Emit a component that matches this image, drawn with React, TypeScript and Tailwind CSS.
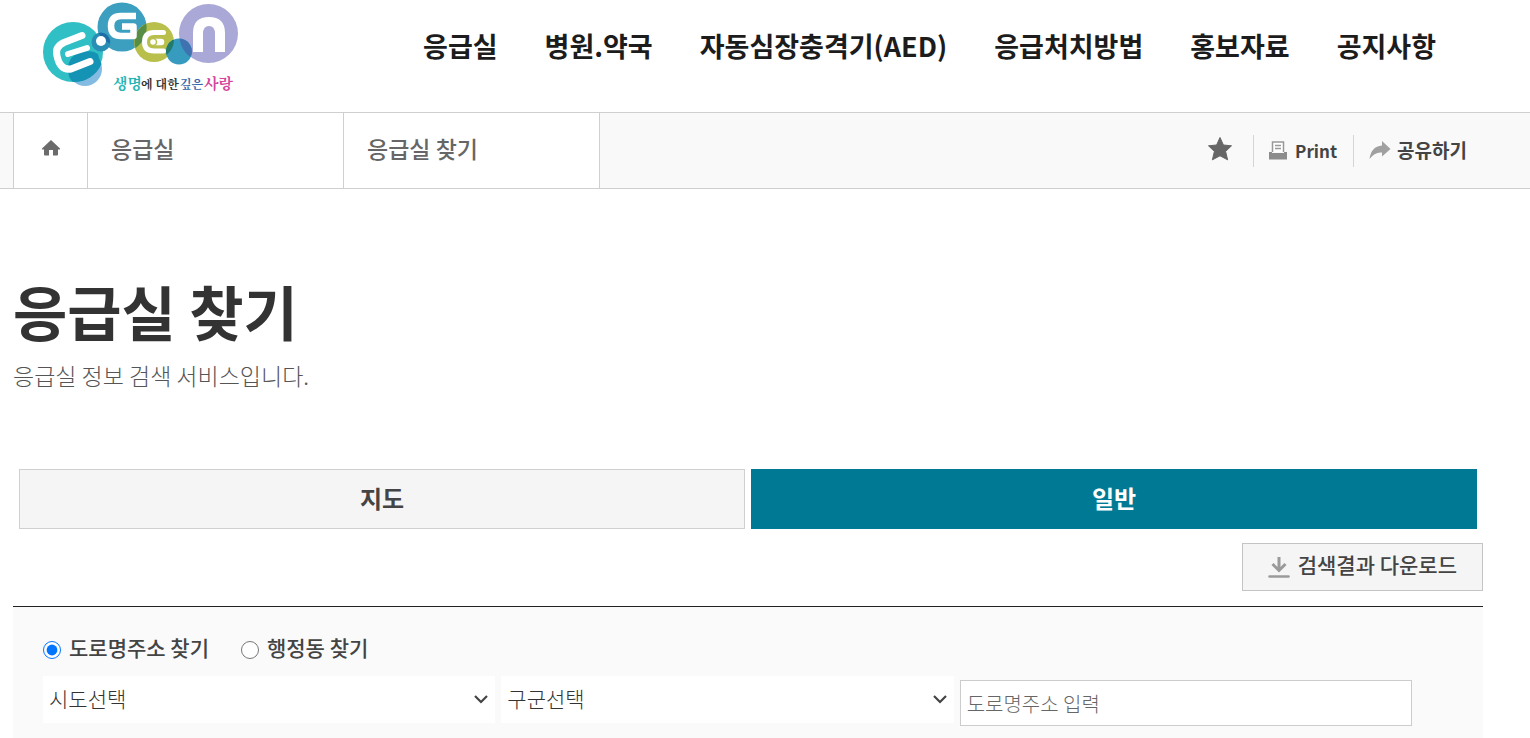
import { useState } from "react";

const menu = ["응급실", "병원.약국", "자동심장충격기(AED)", "응급처치방법", "홍보자료", "공지사항"];
const crumbs = ["응급실", "응급실 찾기"];

function Logo() {
  return (
    <svg width="200" height="96" viewBox="0 0 200 96" role="img" aria-label="E-Gen 생명에 대한 깊은 사랑">
      <circle cx="45" cy="69" r="17" fill="#84bbe2" />
      <circle cx="33" cy="52" r="30" fill="#2fbfc4" />
      <path d="M28.500 73.500A17 17 0 0 1 61.500 64A30 30 0 0 1 33 82Q29 79 28.500 73.500Z" fill="#1593b4" />
      <path d="M38 55Q50 48 58 54L60 62L52 68Q52 58 38 55Z" fill="#1593b4" />
      <circle cx="82" cy="27" r="24.500" fill="#3d9fc0" />
      <circle cx="61" cy="42" r="9.500" fill="#2a8db4" />
      <path d="M58.500 33A9.500 9.500 0 0 1 70 43.500Q63 40 58.500 33Z" fill="#1c6ca5" />
      <circle cx="61" cy="41" r="5" fill="#ffffff" />
      <circle cx="114" cy="42" r="20" fill="#b9bf4b" />
      <path d="M104.500 24.500A20 20 0 0 0 95.500 48A24.500 24.500 0 0 0 106.300 23.500Z" fill="#578d45" />
      <circle cx="168.500" cy="33.500" r="29.500" fill="#a9a8d6" />
      <circle cx="139" cy="51.500" r="13" fill="#369bbf" />
      <path d="M132.500 40A13 13 0 0 0 126.500 55A20 20 0 0 0 134 40Z" fill="#217a6c" />
      <path d="M139.500 38.500A13 13 0 0 1 151.500 54.500L150 57A29.500 29.500 0 0 1 139.500 38.500Z" fill="#3f72b0" />
      <g fill="none" stroke="#ffffff" strokeLinecap="round" strokeLinejoin="round">
        <path d="M42 35.500L24 42.500Q14.500 47 17 56Q20 70.500 31 69L50 61.500" strokeWidth="7" />
        <path d="M28 54L47 48" strokeWidth="6" />
        <path d="M96 16H81Q71 16 71 26Q71 36 81 36H93.500V26.500H82" strokeWidth="6.500" strokeLinecap="butt" />
        <path d="M123.500 32.500H114Q104.500 32.500 104.500 42Q104.500 51 114 51H123.500" strokeWidth="5" />
        <path d="M113 42H121" strokeWidth="6.500" />
      </g>
      <path d="M153 52V33Q153 17 169 17Q185 17 185 33V52H175V34Q175 26 169 26Q163 26 163 34V52Z" fill="#ffffff" />
      <circle cx="113" cy="42" r="3.500" fill="#ffffff" stroke="#b9bf4b" strokeWidth="1.500" />
      <g className="font-['Noto_Serif_CJK_KR','Noto_Sans_CJK_KR',sans-serif] font-bold">
        <text x="73" y="89" fontSize="15" fill="#26b5b4">생명</text>
        <text x="101" y="89" fontSize="12" fill="#333333">에 대한</text>
        <text x="140" y="89" fontSize="12" fill="#3565aa">깊은</text>
        <text x="164" y="89" fontSize="15" fill="#d5449b">사랑</text>
      </g>
    </svg>
  );
}

function HomeIcon() {
  return (
    <svg width="20" height="18" viewBox="0 0 20 18" fill="#6b6b6b" aria-hidden="true">
      <path d="M10 1L19 9.500Q19.500 10.500 18.500 10.500H17V15.500Q17 16.500 16 16.500H12V11H8V16.500H4Q3 16.500 3 15.500V10.500H1.500Q.5 10.500 1 9.500Z" />
    </svg>
  );
}

function StarIcon() {
  return (
    <svg width="26" height="26" viewBox="0 0 26 26" fill="#666666" stroke="#666666" strokeLinejoin="round" aria-hidden="true">
      <path d="M13 1.500L16.400 9L24.500 9.800L18.600 15.400L20.600 23.800L13 19.800L5.400 23.800L7.400 15.400L1.500 9.800L9.600 9Z" />
    </svg>
  );
}

function PrinterIcon() {
  return (
    <svg width="18" height="19" viewBox="0 0 18 19" aria-hidden="true">
      <path d="M3.500 11V1H14.500V11" fill="#ffffff" stroke="#999999" strokeWidth="1.500" />
      <path d="M6 4.500H12M6 7.500H12" stroke="#999999" strokeWidth="1.500" />
      <path d="M0 11H3V12H15V11H18V18.500H0Z" fill="#8c8c8c" />
    </svg>
  );
}

function ShareIcon() {
  return (
    <svg width="22" height="19" viewBox="0 0 22 19" fill="#a0a0a0" aria-hidden="true">
      <path d="M13 0L21.500 8L13 15.500V11.500Q6 10.500 .5 18Q2 5.500 13 4.500Z" />
    </svg>
  );
}

function DownloadIcon() {
  return (
    <svg width="22" height="22" viewBox="0 0 22 22" fill="none" stroke="#9a9a9a" strokeWidth="2.500" aria-hidden="true">
      <path d="M11 0V13M4.500 7L11 13.500L17.500 7" strokeWidth="3" />
      <path d="M1.500 19.500H20.500" strokeLinecap="round" />
    </svg>
  );
}

function Region({ label, option }: { label: string; option: string }) {
  return (
    <div className="relative">
      <select
        aria-label={label}
        className="h-[47px] w-full appearance-none bg-white pb-0.5 pl-1.5 pr-10 text-[21px] font-light text-[#333]"
      >
        <option>{option}</option>
      </select>
      <svg
        className="pointer-events-none absolute right-1.5 top-[18px]"
        width="16"
        height="11"
        viewBox="0 0 16 11"
        fill="none"
        stroke="#444444"
        strokeWidth="2.200"
        aria-hidden="true"
      >
        <path d="M2 2L8 8L14 2" />
      </svg>
    </div>
  );
}

export default function App() {
  const [tab, setTab] = useState("일반");
  const [mode, setMode] = useState("도로명주소 찾기");

  return (
    <div className="min-h-screen bg-white font-['Noto_Sans_CJK_KR',sans-serif] text-[#444]">
      <header className="flex h-28 items-start">
        <a href="#home" className="ml-10 shrink-0">
          <Logo />
        </a>
        <nav className="ml-auto mr-[94px] flex gap-[47px] whitespace-nowrap pt-6 text-[27px] font-bold leading-[44px] text-[#1c1c1c]">
          {menu.map((item) => (
            <a key={item} href="#menu">
              {item}
            </a>
          ))}
        </nav>
      </header>

      <div className="flex h-[77px] border-y border-[#cfcfcf] bg-[#f9f9f9] pl-[13px] pr-[63px]">
        <a href="#home" aria-label="홈" className="flex w-[75px] items-center justify-center border-x border-[#cfcfcf] bg-white pb-1.5">
          <HomeIcon />
        </a>
        {crumbs.map((crumb) => (
          <a
            key={crumb}
            href="#crumb"
            className="flex w-64 items-center border-r border-[#cfcfcf] bg-white pb-1 pl-[23px] text-[23px] font-medium text-[#666]"
          >
            {crumb}
          </a>
        ))}
        <div className="ml-auto flex items-center whitespace-nowrap font-bold">
          <button type="button" aria-label="즐겨찾기" className="mr-5 pb-1">
            <StarIcon />
          </button>
          <button type="button" className="flex h-8 items-center gap-2 border-l border-[#d5d5d5] pl-[15px] pr-4 text-[17px]">
            <PrinterIcon />
            Print
          </button>
          <button type="button" className="flex h-8 items-center gap-1.5 border-l border-[#d5d5d5] pl-[15px] text-[19px]">
            <ShareIcon />
            공유하기
          </button>
        </div>
      </div>

      <main className="ml-[13px] mr-[47px]">
        <h1 className="pt-[82px] text-[59px] font-bold leading-[80px] text-[#333]">응급실 찾기</h1>
        <p className="pt-2 text-[23px] font-light leading-8 text-[#555]">응급실 정보 검색 서비스입니다.</p>

        <div role="tablist" className="mt-[78px] flex gap-1.5 px-1.5">
          {["지도", "일반"].map((name) => (
            <button
              key={name}
              type="button"
              role="tab"
              aria-selected={tab === name}
              onClick={() => setTab(name)}
              className={
                tab === name
                  ? "h-[60px] flex-1 border border-[#007a94] bg-[#007a94] pb-0.5 text-2xl font-bold text-white"
                  : "h-[60px] flex-1 border border-[#d0d0d0] bg-[#f5f5f5] pb-0.5 text-2xl font-bold text-[#444]"
              }
            >
              {name}
            </button>
          ))}
        </div>

        <div className="mt-3.5 flex justify-end">
          <button
            type="button"
            className="flex h-12 items-center gap-2 border border-[#c4c4c4] bg-[#f5f5f5] px-[25px] pb-1 text-[21px] font-medium"
          >
            <span className="pt-1.5">
              <DownloadIcon />
            </span>
            검색결과 다운로드
          </button>
        </div>

        <form className="mt-[15px] border-t border-[#222] bg-[#fafafa] px-[30px] pb-6 pt-[22px]">
          <div className="flex gap-8 text-[21px] font-medium leading-9">
            {["도로명주소 찾기", "행정동 찾기"].map((name) => (
              <label key={name} className="flex items-center gap-2">
                <input
                  type="radio"
                  name="mode"
                  checked={mode === name}
                  onChange={() => setMode(name)}
                  className="mt-1.5 size-[18px] accent-[#0075ff]"
                />
                {name}
              </label>
            ))}
          </div>
          <div className="mr-[41px] mt-[11px] grid grid-cols-3 items-start gap-1.5">
            <Region label="시도" option="시도선택" />
            <Region label="구군" option="구군선택" />
            <input
              type="text"
              aria-label="도로명주소"
              placeholder="도로명주소 입력"
              className="mt-1 h-[46px] w-full border border-[#ccc] bg-white px-1.5 text-[20px] font-light placeholder:text-[#666]"
            />
          </div>
        </form>
      </main>
    </div>
  );
}
